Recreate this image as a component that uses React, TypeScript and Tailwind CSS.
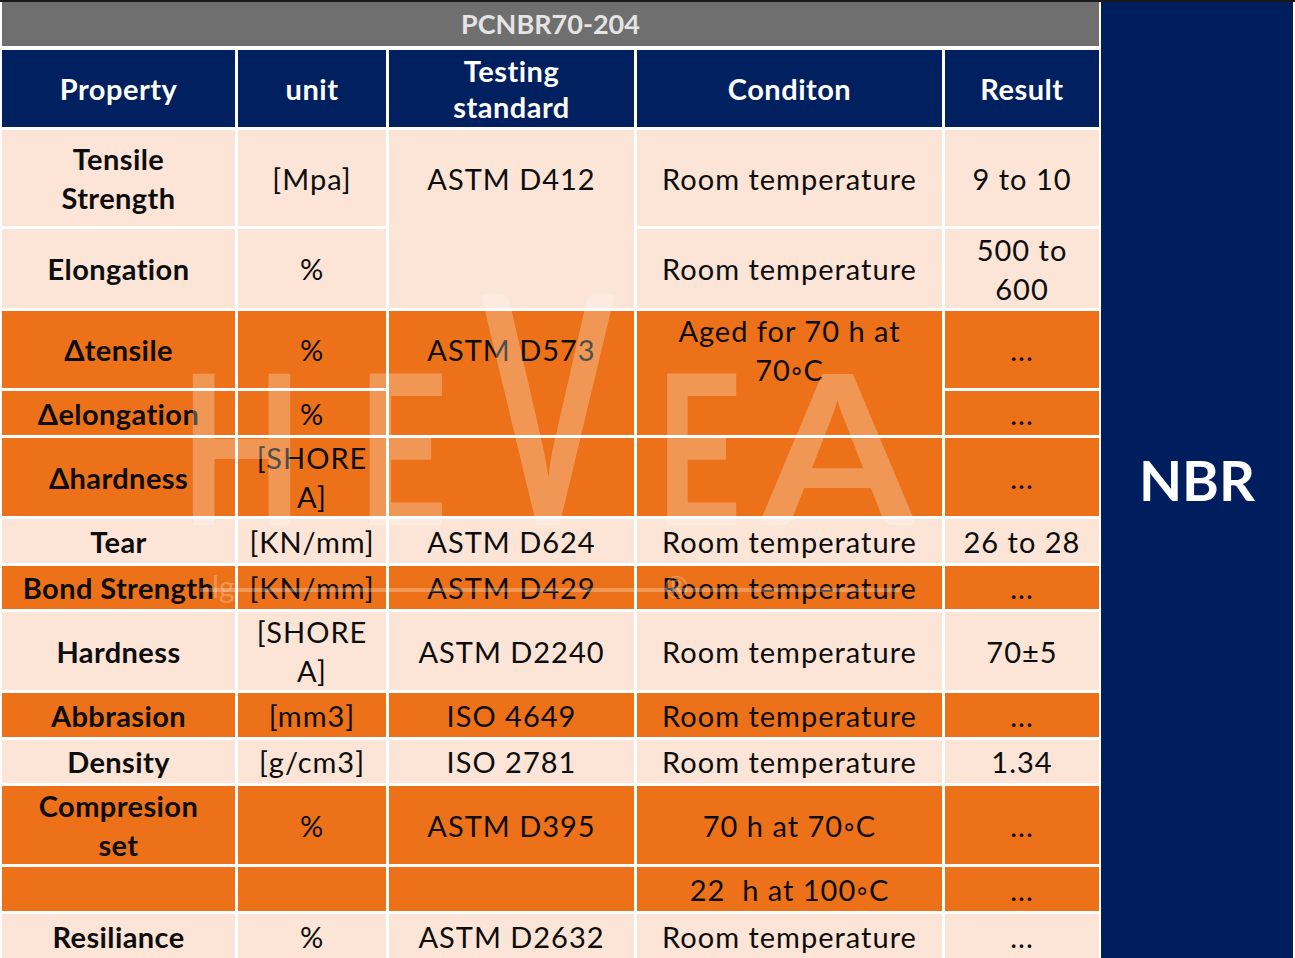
import React from 'react'

type CellProps = {
  children?: React.ReactNode
  bold?: boolean
  tone: 'peach' | 'orange'
  className?: string
}

// celle del corpo tabella
function Cell({ children, bold, tone, className = '' }: CellProps) {
  const bg = tone === 'peach' ? 'bg-[#fce4d6]' : 'bg-[#ec7118]'
  return (
    <div
      className={`${bg} flex items-center justify-center text-center text-[29px] leading-[39px] text-[#0d0d0d] ${
        bold ? 'font-bold tracking-[0.4px]' : 'tracking-[1px]'
      } ${className}`}
    >
      {children}
    </div>
  )
}

function Head({ children }: { children: React.ReactNode }) {
  return (
    <div className="bg-[#002060] flex items-center justify-center text-center text-[29px] leading-[36px] font-bold tracking-[0.5px] text-white">
      {children}
    </div>
  )
}

// logo HEVEA in filigrana sopra la tabella
function Watermark() {
  return (
    <svg
      className="absolute left-0 top-0 pointer-events-none"
      width="1100"
      height="958"
      viewBox="0 0 1100 958"
      aria-hidden="true"
    >
      <g fill="#ffffff" fillOpacity="0.27" fontFamily="Lato, sans-serif" fontWeight="700">
        <text x="180" y="525" fontSize="208" textLength="123" lengthAdjust="spacingAndGlyphs">
          H
        </text>
        <text x="357" y="525" fontSize="208" textLength="91" lengthAdjust="spacingAndGlyphs">
          E
        </text>
        <text x="482" y="525" fontSize="320" textLength="132" lengthAdjust="spacingAndGlyphs">
          V
        </text>
        <text x="655" y="525" fontSize="208" textLength="87" lengthAdjust="spacingAndGlyphs">
          E
        </text>
        <text x="760" y="525" fontSize="208" textLength="155" lengthAdjust="spacingAndGlyphs">
          A
        </text>
        <rect x="200" y="588" width="700" height="4" />
        <text x="664" y="598" fontSize="30" fontWeight="400">
          ®
        </text>
        <text x="212" y="598" fontSize="30" fontWeight="400">
          lg
        </text>
      </g>
    </svg>
  )
}

export default function App() {
  const deg = '\u25E6'
  return (
    <div className="relative w-[1295px] h-[958px] bg-white font-[Lato,sans-serif] overflow-hidden">
      <div className="h-[2px] bg-[#1a1a1a]" />
      <div className="flex pl-[2px]">
        <div className="w-[1097px] flex flex-col">
          <div className="h-[44px] bg-[#6f6f6f] flex items-center justify-center text-[27px] font-bold text-[#e4e4e4]">
            PCNBR70-204
          </div>
          <div className="mt-[4px] grid grid-cols-[233px_148px_245px_305px_154px] grid-rows-[77px_96px_79px_77px_44px_78px_44px_43px_78px_44px_43px_78px_44px_44px] gap-[3px]">
            <Head>Property</Head>
            <Head>unit</Head>
            <Head>
              Testing
              <br />
              standard
            </Head>
            <Head>Conditon</Head>
            <Head>Result</Head>

            {/* Tensile */}
            <Cell tone="peach" bold>
              Tensile
              <br />
              Strength
            </Cell>
            <Cell tone="peach">[Mpa]</Cell>
            <Cell tone="peach" className="row-span-2 !items-start">
              <div className="h-[96px] flex items-center">ASTM D412</div>
            </Cell>
            <Cell tone="peach">Room temperature</Cell>
            <Cell tone="peach">9 to 10</Cell>

            {/* Elongation */}
            <Cell tone="peach" bold>
              Elongation
            </Cell>
            <Cell tone="peach">%</Cell>
            <Cell tone="peach">Room temperature</Cell>
            <Cell tone="peach">
              500 to
              <br />
              600
            </Cell>

            {/* Δtensile */}
            <Cell tone="orange" bold>
              Δtensile
            </Cell>
            <Cell tone="orange">%</Cell>
            <Cell tone="orange" className="row-span-2 !items-start">
              <div className="h-[77px] flex items-center">ASTM D573</div>
            </Cell>
            <Cell tone="orange" className="row-span-2 !items-start">
              <div>
                Aged for 70 h at
                <br />
                70{deg}C
              </div>
            </Cell>
            <Cell tone="orange">...</Cell>

            {/* Δelongation */}
            <Cell tone="orange" bold>
              Δelongation
            </Cell>
            <Cell tone="orange">%</Cell>
            <Cell tone="orange">...</Cell>

            {/* Δhardness */}
            <Cell tone="orange" bold>
              Δhardness
            </Cell>
            <Cell tone="orange">
              [SHORE
              <br />
              A]
            </Cell>
            <Cell tone="orange" />
            <Cell tone="orange" />
            <Cell tone="orange">...</Cell>

            {/* Tear */}
            <Cell tone="peach" bold>
              Tear
            </Cell>
            <Cell tone="peach">[KN/mm]</Cell>
            <Cell tone="peach">ASTM D624</Cell>
            <Cell tone="peach">Room temperature</Cell>
            <Cell tone="peach">26 to 28</Cell>

            {/* Bond */}
            <Cell tone="orange" bold className="whitespace-nowrap">
              Bond Strength
            </Cell>
            <Cell tone="orange">[KN/mm]</Cell>
            <Cell tone="orange">ASTM D429</Cell>
            <Cell tone="orange">Room temperature</Cell>
            <Cell tone="orange">...</Cell>

            {/* Hardness */}
            <Cell tone="peach" bold>
              Hardness
            </Cell>
            <Cell tone="peach">
              [SHORE
              <br />
              A]
            </Cell>
            <Cell tone="peach">ASTM D2240</Cell>
            <Cell tone="peach">Room temperature</Cell>
            <Cell tone="peach">70±5</Cell>

            {/* Abbrasion */}
            <Cell tone="orange" bold>
              Abbrasion
            </Cell>
            <Cell tone="orange">[mm3]</Cell>
            <Cell tone="orange">ISO 4649</Cell>
            <Cell tone="orange">Room temperature</Cell>
            <Cell tone="orange">...</Cell>

            {/* Density */}
            <Cell tone="peach" bold>
              Density
            </Cell>
            <Cell tone="peach">[g/cm3]</Cell>
            <Cell tone="peach">ISO 2781</Cell>
            <Cell tone="peach">Room temperature</Cell>
            <Cell tone="peach">1.34</Cell>

            {/* Compression set */}
            <Cell tone="orange" bold>
              Compresion
              <br />
              set
            </Cell>
            <Cell tone="orange">%</Cell>
            <Cell tone="orange">ASTM D395</Cell>
            <Cell tone="orange">70 h at 70{deg}C</Cell>
            <Cell tone="orange">...</Cell>

            <Cell tone="orange" />
            <Cell tone="orange" />
            <Cell tone="orange" />
            <Cell tone="orange">22&nbsp; h at 100{deg}C</Cell>
            <Cell tone="orange">...</Cell>

            {/* Resiliance */}
            <Cell tone="peach" bold>
              Resiliance
            </Cell>
            <Cell tone="peach">%</Cell>
            <Cell tone="peach">ASTM D2632</Cell>
            <Cell tone="peach">Room temperature</Cell>
            <Cell tone="peach">...</Cell>
          </div>
        </div>
        <div className="ml-[2px] w-[192px] h-[956px] bg-[#001e5e] flex items-center justify-center text-[56px] font-bold text-white">
          NBR
        </div>
      </div>
      <Watermark />
    </div>
  )
}
